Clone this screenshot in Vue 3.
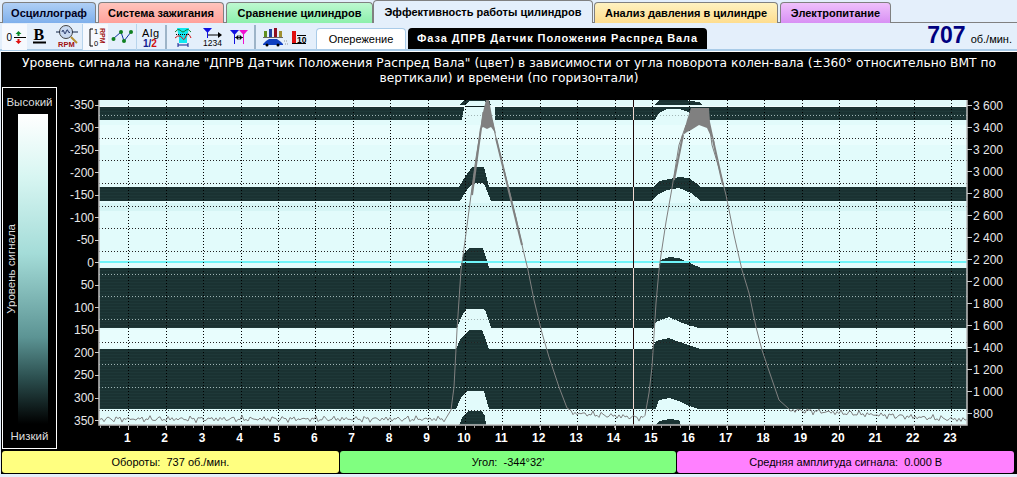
<script setup>
const tabs = [
  { name: 'Осциллограф', cls: 'blue', w: 94 },
  { name: 'Система зажигания', cls: 'red', w: 126 },
  { name: 'Сравнение цилиндров', cls: 'green', w: 147 },
  { name: 'Эффективность работы цилиндров', cls: 'active', w: 220 },
  { name: 'Анализ давления в цилиндре', cls: 'yellow', w: 184 },
  { name: 'Электропитание', cls: 'purple', w: 111 },
]

const leftLabels = []
for (let i = 0; i <= 14; i++) {
  const v = -350 + i * 50
  leftLabels.push({ v, y: 104.5 + i * 22.54 })
}
const rightLabels = []
for (let i = 0; i <= 14; i++) {
  const v = 3600 - i * 200
  const s = v >= 1000 ? `${Math.floor(v / 1000)} ${String(v % 1000).padStart(3, '0')}` : String(v)
  rightLabels.push({ v: s, y: 105 + i * 22 })
}
const hours = []
for (let i = 1; i <= 23; i++) hours.push({ n: i, x: 129.3 + (i - 1) * 37.4 })
const minorTicks = []
for (let x = 101; x < 968; x += 9.35) minorTicks.push(x)

const inDark = (y) => (y > 107 && y < 120) || (y > 187 && y < 201) || (y > 268 && y < 328) || (y > 349 && y < 409)
const gridRows = []
for (let i = 0; i <= 13; i++) {
  const y = Math.round(115 + i * 22.67)
  gridRows.push({ y, color: inDark(y) ? '#9fb4b4' : '#222' })
}

function noise(x) {
  return Math.sin(x * 1.7) * 1.6 + Math.sin(x * 0.61 + 1) * 1.3 + Math.sin(x * 3.9) * 0.9
}
function line(from, to, base) {
  const pts = []
  for (let x = from; x <= to; x += 2) {
    const t = (x - from) / (to - from || 1)
    pts.push(`${x},${(base[0] + (base[1] - base[0]) * t + noise(x)).toFixed(1)}`)
  }
  return pts.join(' ')
}
const rpmCurve = [
  line(101, 448, [419, 419]),
  '452,410 455,387 458,330 462,270 466,241 472,195 477,158 482,128 484,112',
].join(' ')
const rpmFall = [
  '493,120 497,138 503,162 510,190 517,218 523,245 529,270 535,300 543,333 550,357 560,387 568,408',
  line(572, 646, [413, 418]),
  '650,393 653,367 657,303 660,270 662,255 667,222 673,188 680,145 687,125',
].join(' ')
const rpmFall2 = [
  '711,130 713,145 720,168 727,195 735,235 743,270 750,293 757,327 763,350 768,365 780,400 790,409',
  line(792, 968, [410, 420]),
].join(' ')

const stats = [
  { text: 'Обороты:  737 об./мин.', cls: 'st-yellow' },
  { text: 'Угол:  -344°32\'', cls: 'st-green' },
  { text: 'Средняя амплитуда сигнала:  0.000 В', cls: 'st-pink' },
]
</script>

<template>
  <div class="screen">
    <div class="tabs">
      <div v-for="t in tabs" :key="t.name" class="tab" :class="t.cls" :style="{ width: t.w + 'px' }">{{ t.name }}</div>
    </div>

    <div class="toolbar">
      <div class="btn on" style="width:25px">
        <svg viewBox="2 24 25 26" width="25" height="26">
          <text x="6.500" y="41" class="ic-t" font-size="10">0</text>
          <path d="M14 37.500H26" stroke="#000"/>
          <path d="M18.500 31l-3 3h2v2h2v-2h2z" fill="#0a8a2a"/>
          <path d="M18.500 44l-3-3h2v-2h2v2h2z" fill="#e01010"/>
        </svg>
      </div>
      <div class="btn" style="width:28px">
        <svg viewBox="27 24 28 26" width="28" height="26">
          <text x="33.500" y="40" class="ic-serif" font-size="16">B</text>
          <path d="M33 42.500H46" stroke="#000" stroke-width="2"/>
        </svg>
      </div>
      <div class="btn" style="width:27px">
        <svg viewBox="55 24 27 26" width="27" height="26">
          <circle cx="66" cy="32" r="6.500" fill="#c8d8f0" stroke="#444"/>
          <path d="M56 32H60M72 32H78" stroke="#124"/>
          <path d="M62 32q1-4 2 0t2 0 2-1 2 1" fill="none" stroke="#236"/>
          <path d="M71 37l6 6" stroke="#b89030" stroke-width="2"/>
          <text x="58" y="47" class="ic-t red-d" font-size="7.500" font-weight="700">RPM</text>
        </svg>
      </div>
      <div class="btn on gap-l" style="width:25px">
        <svg viewBox="83 24 25 26" width="25" height="26">
          <path d="M93 29H90V46H93" fill="none" stroke="#000"/>
          <text x="94" y="34" class="ic-t" font-size="7.500">1</text>
          <text x="94" y="46" class="ic-t" font-size="7.500">0</text>
          <text x="100" y="28" class="ic-t red-d" font-size="7" font-weight="700" transform="rotate(90 100 28)">RPM</text>
        </svg>
      </div>
      <div class="btn" style="width:28px">
        <svg viewBox="108 24 28 26" width="28" height="26">
          <path d="M113 39L121 32 124 41 131 32" fill="none" stroke="#1030a0"/>
          <circle cx="113.500" cy="39" r="2" fill="#108020"/>
          <circle cx="121" cy="32" r="2" fill="#108020"/>
          <circle cx="124" cy="41" r="2" fill="#108020"/>
          <circle cx="131" cy="32" r="2" fill="#108020"/>
        </svg>
      </div>
      <div class="btn gap-l" style="width:26px">
        <svg viewBox="137 24 26 26" width="26" height="26">
          <text x="142" y="37" class="ic-t" font-size="11" letter-spacing=".6">Alg</text>
          <text x="143" y="47" font-family="Liberation Sans, sans-serif" font-size="10" font-weight="700" fill="#102090">1/<tspan fill="#d01010">2</tspan></text>
        </svg>
      </div>
      <div class="sep s1"></div>
      <div class="btn" style="width:28px">
        <svg viewBox="168 24 28 26" width="28" height="26">
          <path d="M177 28H189L187 38V43H179V38Z" fill="#10e8f0"/>
          <path d="M175 32q3-4 5-2t3 2 3-2 5 2" fill="none" stroke="#108030"/>
          <path d="M175 38q3-3 5-2t3 3 3-3 5 2" fill="none" stroke="#d01010"/>
          <path d="M176 34.500H190" stroke="#000" stroke-dasharray="1 1"/>
          <path d="M178 45H188M178 43v4M188 43v4" stroke="#102090"/>
        </svg>
      </div>
      <div class="btn" style="width:28px">
        <svg viewBox="196 24 28 26" width="28" height="26">
          <path d="M203 28H212L207.500 33Z" fill="#1010e0"/>
          <path d="M207.500 28V38" stroke="#1010e0"/>
          <path d="M208 35H219" stroke="#000"/>
          <path d="M222 35l-4-3v6z" fill="#000"/>
          <text x="203" y="46" class="ic-t" font-size="8.500">1234</text>
        </svg>
      </div>
      <div class="btn" style="width:27px">
        <svg viewBox="224 24 27 26" width="27" height="26">
          <path d="M230 30H239L234.500 35Z" fill="#1010e0"/>
          <path d="M234.500 30V44" stroke="#1010e0"/>
          <path d="M239 30H248L243.500 35Z" fill="#f010d0"/>
          <path d="M243.500 30V44" stroke="#f010d0"/>
          <path d="M235 37.500H243M236 37.500l2-2v4zM242 37.500l-2-2v4z" stroke="#000" stroke-width=".8"/>
        </svg>
      </div>
      <div class="sep s2"></div>
      <div class="btn" style="width:30px">
        <svg viewBox="258 24 30 26" width="30" height="26">
          <path d="M264 31h3v6h-3z" fill="#609020"/>
          <path d="M269 29h3v8h-3z" fill="#2040a0"/>
          <path d="M274 28h3v9h-3z" fill="#901020"/>
          <path d="M279 31h3v6h-3z" fill="#a09030"/>
          <path d="M263 37.500H283" stroke="#666"/>
          <path d="M263 44l3-3 3-2h8l4 3 2 2v1h-20z" fill="#1040c0"/>
          <circle cx="267" cy="45" r="1.500" fill="#000"/>
          <circle cx="278" cy="45" r="1.500" fill="#000"/>
          <path d="M284 41h4M285 44h3" stroke="#999" stroke-dasharray="1 1"/>
        </svg>
      </div>
      <div class="btn" style="width:22px">
        <svg viewBox="288 24 22 26" width="22" height="26">
          <path d="M292 31h4v12h-4z" fill="#e01010"/>
          <path d="M292 43.500H306M297 35.500H306" stroke="#000"/>
          <text x="297" y="43" class="ic-t" font-size="8.500" font-weight="700">10</text>
        </svg>
      </div>
      <div class="subtab light">Опережение</div>
      <div class="subtab dark">Фаза ДПРВ Датчик Положения Распред Вала</div>
      <div class="rpm"><b>707</b><span>об./мин.</span></div>
    </div>

    <div class="panel">
      <div class="title">Уровень сигнала на канале "ДПРВ Датчик Положения Распред Вала" (цвет) в зависимости от угла поворота колен-вала (±360° относительно ВМТ по вертикали) и времени (по горизонтали)</div>

      <div class="main">
        <div class="legend">
          <div class="lg-top">Высокий</div>
          <div class="lg-mid">
            <div class="lg-side"><span>Уровень сигнала</span></div>
            <div class="lg-bar"></div>
          </div>
          <div class="lg-bottom">Низкий</div>
        </div>

        <svg class="chart" viewBox="59 87 958 362" width="958" height="362">
          <defs>
            <pattern id="scan" width="8" height="3" patternUnits="userSpaceOnUse">
              <rect width="8" height="3" fill="#1a3232"/>
              <rect width="8" height="1" fill="#1e3838"/>
            </pattern>
          </defs>

          <rect x="100" y="100" width="868" height="325" fill="#e2fbfb"/>
          <rect x="100" y="125" width="868" height="20" fill="#e9fdfd"/>
          <rect x="100" y="203" width="868" height="8" fill="#d6f5f5"/>
          <rect x="100" y="330" width="868" height="17" fill="#e8fdfd"/>

          <g fill="url(#scan)" shape-rendering="crispEdges">
            <path d="M460 105L465 100H490L492 105Z"/>
            <path d="M655 105L660 100H685L700 102L704 105Z"/>
            <path d="M100 107H465V108L463 120H100Z"/>
            <path d="M496 107H968V120H702L698 118L690 112L680 109H668L660 113L656 120H496Z"/>
            <path d="M100 187H460L466 177L473 167H485L490 187H655L660 181L680 177L690 178L702 187H968V201H702L692 193L680 188L668 190L658 195L652 201H492L486 186L484 183H474L468 190L461 201H100Z"/>
            <path d="M100 268H461L464 255L470 248H484L488 260L490 268H660L661 260L670 257L680 258L702 268H968V328H700L683 323L670 317L657 322L655 328H492L487 312L485 309H467L462 318L458 328H100Z"/>
            <path d="M100 349H457L462 338L470 330H483L487 340L490 349H653L657 341L670 338L683 343L702 349H968V409H700L690 406L680 401L670 398L660 400L657 409H490L486 395L485 391H468L462 398L457 409H100Z"/>
            <path d="M460 425L464 416L470 411H483L486 416L487 425Z"/>
            <path d="M657 425L660 421L670 419L680 420L682 425Z"/>
          </g>
          <path d="M467 105L470 101H486L488 105Z" fill="#e2fbfb" shape-rendering="crispEdges"/>
          <path d="M100 106H968" stroke="#f4ffff" shape-rendering="crispEdges"/>
          <path d="M466 106.500H488" stroke="#102020" shape-rendering="crispEdges"/>
          <rect x="100" y="261" width="868" height="2" fill="#6ff4f8"/>

          <g shape-rendering="crispEdges">
            <path v-for="h in hours" :key="h.n" :d="`M${Math.round(h.x) + 0.5} 100V425`" stroke="#000" stroke-dasharray="1 2"/>
            <path v-for="r in gridRows" :key="r.y" :d="`M100 ${r.y + 0.5}H968`" :stroke="r.color" stroke-dasharray="1 2"/>
          </g>

          <path d="M634.500 100V425" stroke="#200808" shape-rendering="crispEdges"/>
          <path d="M634.500 107V120M634.500 187V201M634.500 268V328M634.500 349V409" stroke="#f0d8d0" shape-rendering="crispEdges"/>

          <g fill="none" stroke="#808080">
            <polyline :points="rpmCurve"/>
            <polyline :points="rpmFall"/>
            <polyline :points="rpmFall2"/>
          </g>
          <path d="M481 130L484 112 487 100 490 100 493 116 497 134 492 127 488 129 484 127Z" fill="#808080"/>
          <path d="M684 135L688 120 692 108H710L711 122 716 145 708 128 700 125 692 130 688 132Z" fill="#808080"/>
          <path d="M473 195L482 128M497 138L523 245M675 180L684 135M714 140L724 185" stroke="#808080" stroke-width="2"/>

          <path d="M100 100V425H968V100" fill="none" stroke="#c0c0c0" stroke-width="1.500"/>
          <g shape-rendering="crispEdges">
            <path v-for="(x, i) in minorTicks" :key="i" :d="`M${Math.round(x) + 0.5} 426V428`" stroke="#999"/>
            <path v-for="h in hours" :key="'m' + h.n" :d="`M${Math.round(h.x) + 0.5} 426V430`" stroke="#ccc"/>
            <path v-for="l in leftLabels" :key="'l' + l.v" :d="`M96 ${Math.round(l.y) + 0.5}H100`" stroke="#ccc"/>
            <path v-for="l in rightLabels" :key="'r' + l.v" :d="`M968 ${Math.round(l.y) + 0.5}H973`" stroke="#ccc"/>
          </g>

          <text v-for="l in leftLabels" :key="'lt' + l.v" x="95" :y="l.y + 4.500" text-anchor="end" class="ax">{{ l.v }}</text>
          <text v-for="l in rightLabels" :key="'rt' + l.v" x="974" :y="l.y + 4.500" class="ax">{{ l.v }}</text>
          <text v-for="h in hours" :key="'ht' + h.n" :x="h.x - 1" y="442" text-anchor="middle" class="hr">{{ h.n }}</text>
        </svg>
      </div>

      <div class="status">
        <div v-for="s in stats" :key="s.cls" class="st" :class="s.cls">{{ s.text }}</div>
      </div>
    </div>
  </div>
</template>

<style scoped>
.screen {
  width: 1017px;
  height: 477px;
  overflow: hidden;
  background: #e4effb;
  font-family: "Liberation Sans", Arial, sans-serif;
  display: flex;
  flex-direction: column;
}

.tabs {
  display: flex;
  height: 23px;
  gap: 2px;
  padding: 2px 0 0 2px;
  box-sizing: border-box;
  border-bottom: 1px solid #808080;
}

.tab {
  height: 21px;
  box-sizing: border-box;
  border: 1px solid #808080;
  border-bottom: none;
  border-radius: 4px 4px 0 0;
  font-size: 11px;
  font-weight: 700;
  line-height: 20px;
  text-align: center;
  white-space: nowrap;
  color: #000;
}

.blue { background: linear-gradient(#afcff5, #7fb0ec); color: #000020; }
.red { background: linear-gradient(#ffc4bc, #ffa09a); }
.green { background: linear-gradient(#bdf8d0, #8cf0ac); }
.yellow { background: linear-gradient(#fff2c0, #fedd8e); }
.purple { background: linear-gradient(#efc0fb, #d890f4); }

.active {
  height: 23px;
  margin: -2px -1px -1px -2px;
  background: #e4effb;
  line-height: 22px;
}

.toolbar {
  display: flex;
  height: 28px;
  box-sizing: border-box;
  padding: 1px 0 0 2px;
  align-items: flex-start;
  border-bottom: 2px solid #a9cbe8;
}

.btn {
  height: 26px;
  flex: none;
}

.btn svg {
  display: block;
}

.btn.on {
  background: #f6f9fe;
}

.gap-l {
  border-left: 1px solid #b8d4ec;
}

.sep {
  width: 2px;
  height: 24px;
  margin-top: 1px;
  background: #9db4c8;
  flex: none;
}

.s1 {
  margin-left: 2px;
  margin-right: 1px;
}

.s2 {
  margin-left: 3px;
  margin-right: 2px;
}

.ic-t {
  font-family: "Liberation Sans", sans-serif;
  fill: #000;
}

.red-d {
  fill: #a01010;
}

.ic-serif {
  font-family: "Liberation Serif", serif;
  font-weight: 700;
  fill: #000;
}

.subtab {
  height: 21px;
  margin-top: 4px;
  box-sizing: border-box;
  line-height: 21px;
  text-align: center;
  white-space: nowrap;
  flex: none;
}

.subtab.light {
  width: 90px;
  margin-left: 6px;
  background: #fff;
  border: 1px solid #a9cbe8;
  border-bottom: none;
  border-radius: 4px 4px 0 0;
  color: #000;
  font-size: 11px;
}

.subtab.dark {
  width: 299px;
  margin-left: 2px;
  background: #000;
  border-radius: 4px 4px 0 0;
  color: #fff;
  font-size: 11px;
  font-weight: 700;
  letter-spacing: 0.9px;
}

.rpm {
  margin-left: auto;
  padding-right: 5px;
  display: flex;
  align-items: baseline;
  gap: 5px;
  color: #000;
  font-size: 11px;
}

.rpm b {
  font-size: 23px;
  line-height: 23px;
  color: #00007f;
}

.panel {
  height: 423px;
  flex: none;
  background: #000;
  margin-left: 1px;
  border-top: 1px solid #fff;
  box-sizing: border-box;
  display: flex;
  flex-direction: column;
}

.title {
  height: 35px;
  padding: 4px 8px 0;
  color: #fff;
  font-family: "DejaVu Sans", sans-serif;
  font-size: 12.250px;
  line-height: 15px;
  text-align: center;
  box-sizing: border-box;
}

.main {
  display: flex;
  height: 362px;
}

.legend {
  width: 55px;
  margin-left: 1px;
  margin-right: 1px;
  box-sizing: border-box;
  border: 1px solid #fff;
  color: #ddd;
  font-size: 11.500px;
  display: flex;
  flex-direction: column;
  flex: none;
}

.lg-top,
.lg-bottom {
  height: 26px;
  line-height: 29px;
  text-align: center;
  flex: none;
}

.lg-bottom {
  height: 24px;
  line-height: 25px;
}

.lg-mid {
  flex: 1;
  display: flex;
  min-height: 0;
}

.lg-side {
  width: 15px;
  display: flex;
  align-items: center;
  justify-content: center;
}

.lg-side span {
  writing-mode: vertical-rl;
  transform: rotate(180deg);
  white-space: nowrap;
}

.lg-bar {
  width: 30px;
  background: linear-gradient(#fff 0%, #d8f6f2 20%, #a4dcd8 45%, #5c9494 72%, #2c5050 85%, #000 100%);
}

.chart {
  display: block;
  flex: none;
}

.ax {
  font-family: "Liberation Sans", sans-serif;
  font-size: 12px;
  fill: #e8e8e8;
}

.hr {
  font-family: "Liberation Sans", sans-serif;
  font-size: 12px;
  font-weight: 700;
  fill: #fff;
}

.status {
  display: flex;
  height: 22px;
  margin: 2px 3px 0 1px;
  gap: 1px;
}

.st {
  flex: 1;
  border-radius: 3px;
  font-size: 11px;
  line-height: 22px;
  text-align: center;
  color: #000;
  white-space: pre;
}

.st-yellow { background: #ffff80; }
.st-green { background: #80ff80; }
.st-pink { background: #ff80ff; }
</style>
